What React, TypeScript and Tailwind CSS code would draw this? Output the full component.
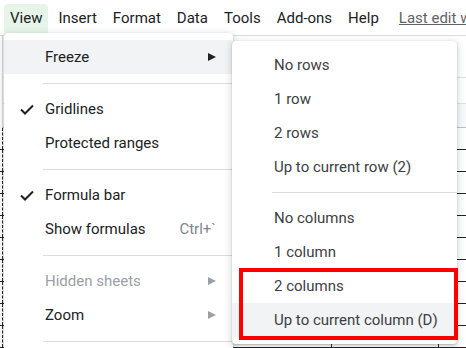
import React from "react";

const topMenus = ["Insert", "Format", "Data", "Tools", "Add-ons", "Help"];

type Item =
  | { kind: "sep" }
  | { kind: "item"; label: string; check?: boolean; arrow?: boolean; hot?: boolean; dim?: boolean; shortcut?: string };

const viewItems: Item[] = [
  { kind: "item", label: "Freeze", arrow: true, hot: true },
  { kind: "sep" },
  { kind: "item", label: "Gridlines", check: true },
  { kind: "item", label: "Protected ranges" },
  { kind: "sep" },
  { kind: "item", label: "Formula bar", check: true },
  { kind: "item", label: "Show formulas", shortcut: "Ctrl+`" },
  { kind: "sep" },
  { kind: "item", label: "Hidden sheets", arrow: true, dim: true },
  { kind: "item", label: "Zoom", arrow: true },
  { kind: "sep" },
];

const freezeItems = [
  ["No rows", "1 row", "2 rows", "Up to current row (2)"],
  ["No columns", "1 column", "2 columns", "Up to current column (D)"],
];

function Check() {
  return (
    <svg width="14" height="11" viewBox="0 0 14 11" fill="none">
      <path d="M1 5.5 L5 9.5 L13 1.5" stroke="#202124" strokeWidth="2" />
    </svg>
  );
}

function Arrow({ dark }: { dark?: boolean }) {
  return (
    <svg width="8" height="8" viewBox="0 0 8 8">
      <polygon points="0,0 8,4 0,8" fill={dark ? "#202124" : "#9aa0a6"} />
    </svg>
  );
}

export default function App() {
  const rows = Array.from({ length: 10 });

  return (
    <div className="relative w-[466px] h-[348px] overflow-hidden bg-white font-['Roboto','Liberation_Sans',sans-serif] text-[15px]">
      {/* menu bar */}
      <div className="flex items-end h-[36px] border-b border-[#dadce0] pl-[4px] gap-[4px] overflow-hidden whitespace-nowrap">
        <div className="shrink-0 h-[31px] px-[6px] pb-[2px] flex items-center rounded-t-[4px] bg-[#e6f4ea] text-[#202124]">
          View
        </div>
        {topMenus.map((m) => (
          <div key={m} className="shrink-0 h-[31px] px-[6px] pb-[2px] flex items-center text-[#202124]">
            {m}
          </div>
        ))}
        <div className="shrink-0 h-[31px] pl-[10px] pb-[2px] flex items-center text-[#5f6368] underline">
          Last edit was seconds ago
        </div>
      </div>

      {/* sheet behind the menus */}
      <div className="flex flex-col">
        <div className="h-[42px] border-b border-[#e0e0e0] border-l border-l-[#dadce0] ml-[2px]" />
        <div className="h-[26px] border-b border-[#e0e0e0] border-l border-l-[#dadce0] ml-[2px]" />
        <div className="h-[24px] border-b border-[#c0c0c0] bg-[#f8f9fa] border-l border-l-[#dadce0] ml-[2px]" />
        {rows.map((_, i) => (
          <div key={i} className="flex h-[22px] border-b border-[#202124]">
            <div className="w-[3px] border-r border-dashed border-[#202124]" />
            <div className="w-[329px] border-r border-[#202124]" />
            <div className="w-[107px] border-r border-[#202124]" />
            <div className="flex-1" />
          </div>
        ))}
      </div>

      {/* View menu */}
      <div className="absolute left-[4px] top-[33px] w-[229px] h-[330px] bg-white py-[7px] rounded-[4px] shadow-[0_2px_6px_2px_rgba(60,64,67,0.15),0_1px_2px_rgba(60,64,67,0.3)]">
        {viewItems.map((it, i) =>
          it.kind === "sep" ? (
            <div key={i} className="h-[18px] pt-[9px]">
              <div className="ml-[39px] h-px bg-[#dadce0]" />
            </div>
          ) : (
            <div
              key={i}
              className={`flex items-center h-[34px] pr-[17px] ${it.hot ? "bg-[#f1f3f4]" : ""}`}
            >
              <div className="w-[41px] pl-[16px] flex items-center">{it.check && <Check />}</div>
              <div className={`flex-1 ${it.dim ? "text-[#9aa0a6]" : "text-[#202124]"}`}>{it.label}</div>
              {it.shortcut && <div className="text-[#80868b]">{it.shortcut}</div>}
              {it.arrow && <Arrow dark={it.hot} />}
            </div>
          )
        )}
      </div>

      {/* Freeze submenu */}
      <div className="absolute left-[232px] top-[41px] w-[225px] bg-white py-[7px] rounded-[4px] shadow-[0_2px_6px_2px_rgba(60,64,67,0.15),0_1px_2px_rgba(60,64,67,0.3)]">
        {freezeItems.map((group, g) => (
          <div key={g}>
            {g > 0 && (
              <div className="h-[17px] pt-[8px]">
                <div className="ml-[40px] h-px bg-[#dadce0]" />
              </div>
            )}
            {group.map((label, j) => (
              <div
                key={label}
                className={`flex items-center h-[34px] pl-[42px] text-[#3c4043] ${
                  g === 1 && j === 3 ? "bg-[#f1f3f4]" : ""
                }`}
              >
                {label}
              </div>
            ))}
          </div>
        ))}
      </div>

      {/* annotation box */}
      <div className="absolute left-[239px] top-[268px] w-[219px] h-[72px] border-4 border-[#ff0000]" />
    </div>
  );
}
